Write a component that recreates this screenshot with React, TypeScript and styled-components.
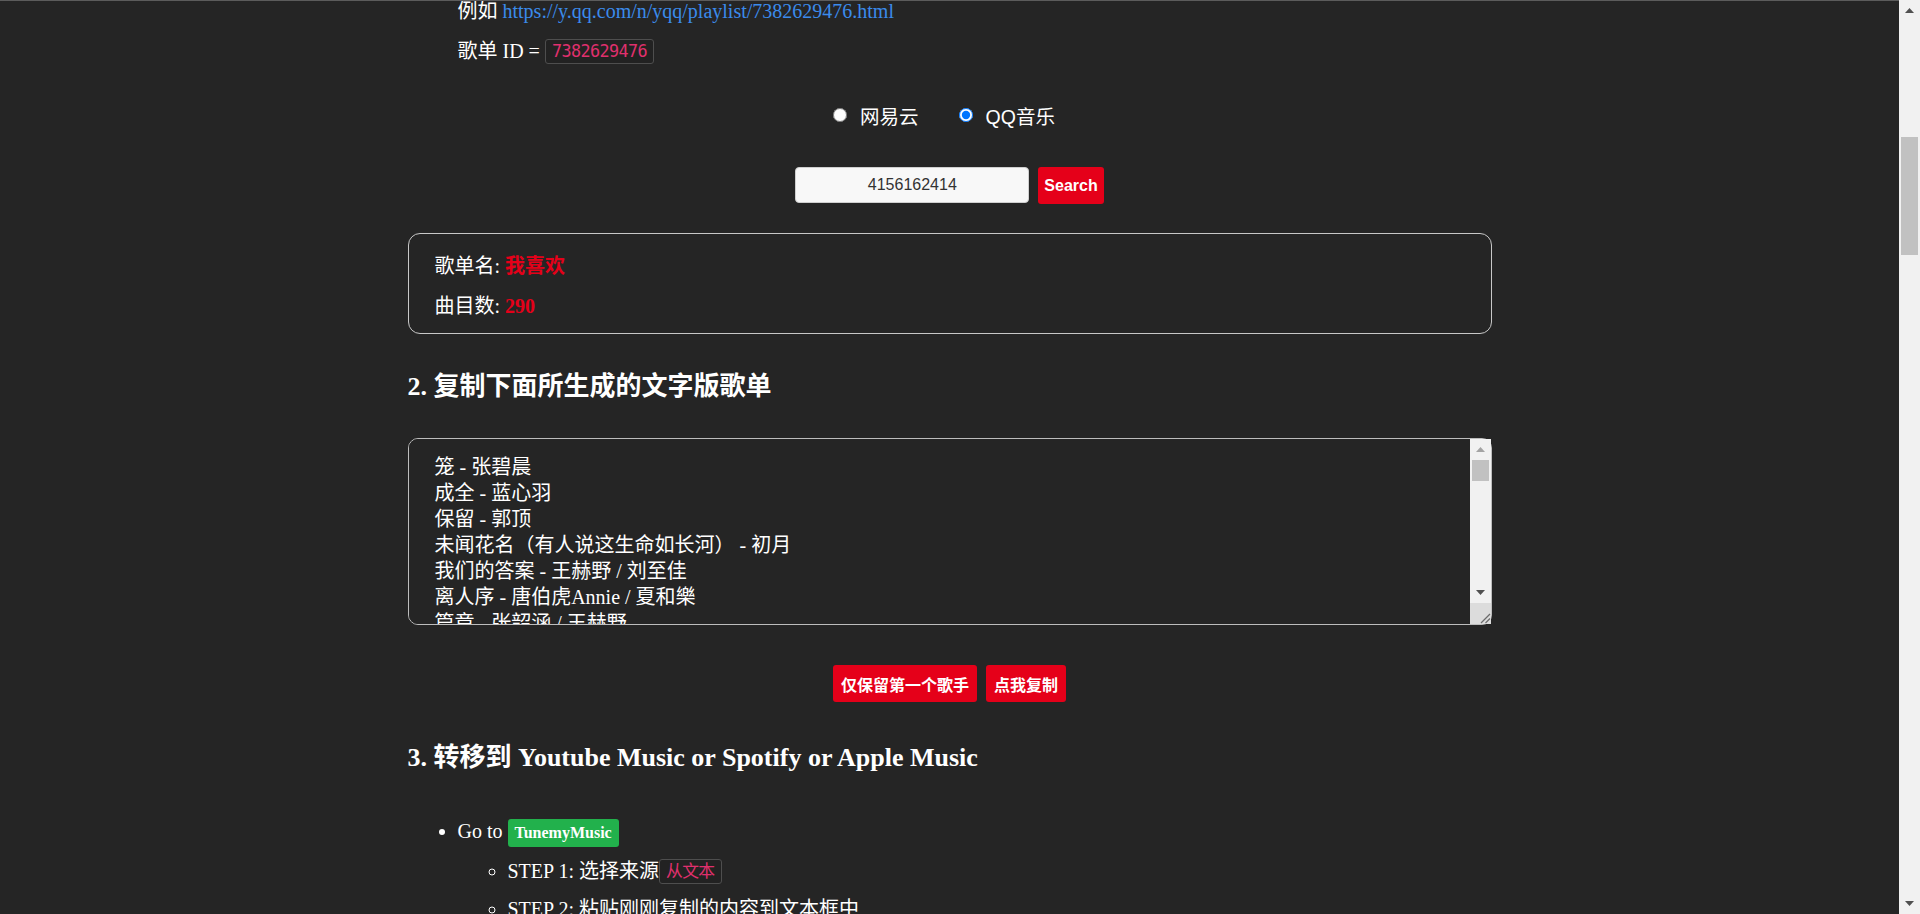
import React, { useLayoutEffect, useRef } from "react";
import styled, { createGlobalStyle } from "styled-components";

const GlobalStyle = createGlobalStyle`
  html { scrollbar-width: none; }
  html, body { margin: 0; padding: 0; background: #252525; }
  body {
    color: #ffffff;
    font-family: "Liberation Serif", "Noto Sans CJK SC", serif;
    font-size: 20px;
  }
  * { box-sizing: border-box; }
`;

const TopLine = styled.div`
  position: fixed;
  top: 0;
  left: 0;
  right: 21px;
  height: 1px;
  background: #5c5c5c;
  z-index: 10;
`;

/* ---------- scrollbar drawing (classic Windows style) ---------- */

const Rail = styled.div`
  width: 21px;
  background: #f1f1f1;
  display: flex;
  flex-direction: column;
`;

const PageRail = styled(Rail)`
  position: fixed;
  top: 0;
  right: 0;
  bottom: 0;
  z-index: 20;
`;

const AreaRail = styled(Rail)`
  position: absolute;
  top: 1px;
  right: 1px;
  bottom: 1px;
`;

const ArrowButton = styled.div<{ $dim?: boolean }>`
  height: 21px;
  flex: none;
  display: flex;
  align-items: center;
  justify-content: center;
  color: ${(p) => (p.$dim ? "#a3a3a3" : "#505050")};
  svg { display: block; }
`;

const Track = styled.div`
  flex: 1;
  position: relative;
`;

const Thumb = styled.div<{ $top: number; $h: number }>`
  position: absolute;
  left: 2px;
  right: 2px;
  top: ${(p) => p.$top}px;
  height: ${(p) => p.$h}px;
  background: #c1c1c1;
`;

const Corner = styled.div`
  height: 21px;
  flex: none;
  background: #dcdcdc;
  display: flex;
  align-items: flex-end;
  justify-content: flex-end;
  svg { display: block; }
`;

function Arrow({ up }: { up?: boolean }) {
  return (
    <svg width="9" height="5" viewBox="0 0 9 5">
      <polygon points={up ? "4.5,0 9,5 0,5" : "0,0 9,0 4.5,5"} fill="currentColor" />
    </svg>
  );
}

/* ---------- page ---------- */

const Page = styled.div`
  padding-right: 21px;
`;

const Container = styled.main`
  width: 1084px;
  margin: 0 auto;
`;

const Intro = styled.header`
  min-height: 560px;
  padding-top: 60px;
  text-align: center;
`;

const Title = styled.h1`
  margin: 0 0 24px;
  font-size: 36px;
`;

const Lead = styled.p`
  margin: 0;
  line-height: 30px;
  color: #dddddd;
`;

const Heading = styled.h2`
  margin: 0;
  font-size: 26px;
  line-height: 32px;
  font-weight: 700;
  font-family: "Liberation Serif", "Noto Sans CJK SC", serif;
`;

const Steps = styled.ul`
  margin: 40px 0 0;
  padding-left: 50px;
  list-style: disc;
`;

const StepItem = styled.li`
  line-height: 28px;
`;

const Para = styled.p`
  margin: 0 0 17px;
  line-height: 22px;
  &:last-child { margin-bottom: 0; }
`;

const Link = styled.a`
  color: #3b8beb;
  text-decoration: none;
`;

const Code = styled.code`
  display: inline-block;
  font-family: "DejaVu Sans Mono", "Noto Sans CJK SC", monospace;
  font-size: 16.8px;
  letter-spacing: -0.6px;
  line-height: 21px;
  padding: 1px 6px;
  color: #e0306e;
  border: 1px solid #4e4e4e;
  border-radius: 3px;
  background: #222222;
  vertical-align: 1px;
`;

const RadioRow = styled.div`
  display: flex;
  justify-content: center;
  gap: 40px;
  margin: 39px 11px 0 0;
  height: 24px;
  align-items: center;
`;

const RadioLabel = styled.label`
  display: flex;
  align-items: center;
  gap: 13px;
  font-family: "Liberation Sans", "Noto Sans CJK SC", sans-serif;
  font-size: 19.5px;
  input {
    margin: 0;
    width: 14px;
    height: 14px;
  }
`;

const SearchRow = styled.div`
  display: flex;
  justify-content: center;
  gap: 9px;
  margin-top: 40px;
`;

const SearchInput = styled.input`
  width: 234px;
  height: 36px;
  border: 1px solid #cfcfcf;
  border-radius: 4px;
  background: #f8f8f8;
  color: #333333;
  text-align: center;
  font-family: "Liberation Sans", sans-serif;
  font-size: 16px;
  outline: none;
`;

const RedButton = styled.button<{ $pad?: number }>`
  height: 37px;
  padding: 0 ${(p) => p.$pad ?? 6}px;
  border: none;
  border-radius: 3px;
  background: #e50019;
  color: #ffffff;
  font-family: "Liberation Sans", "Noto Sans CJK SC", sans-serif;
  font-size: 16px;
  font-weight: 700;
  cursor: pointer;
`;

const InfoBox = styled.section`
  margin-top: 29px;
  border: 1px solid #c8c8c8;
  border-radius: 12px;
  padding: 21px 26px 16px;
  display: flex;
  flex-direction: column;
  gap: 18px;
`;

const InfoLine = styled.div`
  line-height: 22px;
`;

const RedText = styled.strong`
  color: #e50019;
  font-weight: 700;
`;

const SectionHeading = styled(Heading)`
  margin-top: 37px;
`;

const AreaWrap = styled.div`
  position: relative;
  margin-top: 35px;
`;

const SongArea = styled.textarea`
  display: block;
  width: 100%;
  height: 187px;
  padding: 15px 40px 12px 26px;
  border: 1px solid #bdbdbd;
  border-radius: 10px;
  background: #252525;
  color: #ffffff;
  font-family: "Liberation Serif", "Noto Sans CJK SC", serif;
  font-size: 20px;
  line-height: 26px;
  resize: none;
  outline: none;
  scrollbar-width: none;
`;

const ButtonRow = styled.div`
  display: flex;
  justify-content: center;
  gap: 9px;
  margin-top: 40px;
`;

const TransferHeading = styled(Heading)`
  margin-top: 40px;
`;

const TransferList = styled.ul`
  margin: 43px 0 0;
  padding-left: 50px;
  list-style: disc;
`;

const SubList = styled.ul`
  margin: 10px 0 0;
  padding-left: 50px;
  list-style: circle;
  display: flex;
  flex-direction: column;
  gap: 10px;
`;

const ListItem = styled.li`
  line-height: 28px;
`;

const Badge = styled.a`
  display: inline-block;
  height: 28px;
  padding: 0 7px;
  line-height: 28px;
  border-radius: 3px;
  background: #22b14c;
  color: #ffffff;
  font-family: "Liberation Serif", serif;
  font-size: 16px;
  font-weight: 700;
  text-decoration: none;
  vertical-align: middle;
`;

const Footer = styled.footer`
  min-height: 5000px;
  padding-top: 80px;
  text-align: center;
  color: #9a9a9a;
  font-size: 16px;
`;

const baseSongs = [
  "笼 - 张碧晨",
  "成全 - 蓝心羽",
  "保留 - 郭顶",
  "未闻花名（有人说这生命如长河） - 初月",
  "我们的答案 - 王赫野 / 刘至佳",
  "离人序 - 唐伯虎Annie / 夏和樂",
  "篇章 - 张韶涵 / 王赫野",
  "若月亮没来 - 王宇宙Leto / 乔浚丞",
  "晴天 - 周杰伦",
  "稻香 - 周杰伦",
  "光年之外 - G.E.M. 邓紫棋",
  "孤勇者 - 陈奕迅",
  "起风了 - 买辣椒也用券",
  "海底 - 一支榴莲",
  "这世界那么多人 - 莫文蔚",
  "明天，你好 - 牛奶咖啡",
  "后来 - 刘若英",
  "小幸运 - 田馥甄",
  "平凡之路 - 朴树",
  "夜空中最亮的星 - 逃跑计划",
];

const songs: string[] = [];
for (let i = 0; i < 290; i++) songs.push(baseSongs[i % baseSongs.length]);
const songText = songs.join("\n");

export default function App() {
  const anchor = useRef<HTMLParagraphElement>(null);

  useLayoutEffect(() => {
    const el = anchor.current;
    if (!el) return;
    const top = el.getBoundingClientRect().top + window.scrollY;
    window.scrollTo(0, top);
  }, []);

  return (
    <Page>
      <GlobalStyle />
      <TopLine />
      <PageRail>
        <ArrowButton>
          <Arrow up />
        </ArrowButton>
        <Track>
          <Thumb $top={116} $h={118} />
        </Track>
        <ArrowButton>
          <Arrow />
        </ArrowButton>
      </PageRail>

      <Container>
        <Intro>
          <Title>歌单转移工具</Title>
          <Lead>把 网易云音乐 / QQ音乐 的歌单转移到 Youtube Music、Spotify 或 Apple Music</Lead>
        </Intro>
        <Heading>1. 输入歌单 ID</Heading>
        <Steps>
          <StepItem>
            <Para>打开 QQ音乐 网页版，复制歌单链接中的数字</Para>
            <Para ref={anchor}>
              例如 <Link href="#">https://y.qq.com/n/yqq/playlist/7382629476.html</Link>
            </Para>
            <Para>
              歌单 ID = <Code>7382629476</Code>
            </Para>
          </StepItem>
        </Steps>

        <RadioRow>
          <RadioLabel>
            <input type="radio" name="source" />
            网易云
          </RadioLabel>
          <RadioLabel>
            <input type="radio" name="source" defaultChecked />
            QQ音乐
          </RadioLabel>
        </RadioRow>

        <SearchRow>
          <SearchInput defaultValue="4156162414" />
          <RedButton $pad={6}>Search</RedButton>
        </SearchRow>

        <InfoBox>
          <InfoLine>
            歌单名: <RedText>我喜欢</RedText>
          </InfoLine>
          <InfoLine>
            曲目数: <RedText>290</RedText>
          </InfoLine>
        </InfoBox>

        <SectionHeading>2. 复制下面所生成的文字版歌单</SectionHeading>
        <AreaWrap>
          <SongArea defaultValue={songText} spellCheck={false} />
          <AreaRail>
            <ArrowButton $dim>
              <Arrow up />
            </ArrowButton>
            <Track>
              <Thumb $top={0} $h={21} />
            </Track>
            <ArrowButton>
              <Arrow />
            </ArrowButton>
            <Corner>
              <svg width="12" height="12" viewBox="0 0 12 12">
                <line x1="2" y1="11" x2="11" y2="2" stroke="#6b6b6b" strokeWidth="1.2" />
                <line x1="6.5" y1="11" x2="11" y2="6.5" stroke="#6b6b6b" strokeWidth="1.2" />
              </svg>
            </Corner>
          </AreaRail>
        </AreaWrap>

        <ButtonRow>
          <RedButton $pad={8}>仅保留第一个歌手</RedButton>
          <RedButton $pad={8}>点我复制</RedButton>
        </ButtonRow>

        <TransferHeading>3. 转移到 Youtube Music or Spotify or Apple Music</TransferHeading>
        <TransferList>
          <ListItem>
            Go to <Badge href="#">TunemyMusic</Badge>
            <SubList>
              <ListItem>
                STEP 1: 选择来源<Code>从文本</Code>
              </ListItem>
              <ListItem>STEP 2: 粘贴刚刚复制的内容到文本框中</ListItem>
              <ListItem>STEP 3: 选择目的地并开始转移</ListItem>
            </SubList>
          </ListItem>
        </TransferList>

        <Footer>© 歌单转移工具</Footer>
      </Container>
    </Page>
  );
}
